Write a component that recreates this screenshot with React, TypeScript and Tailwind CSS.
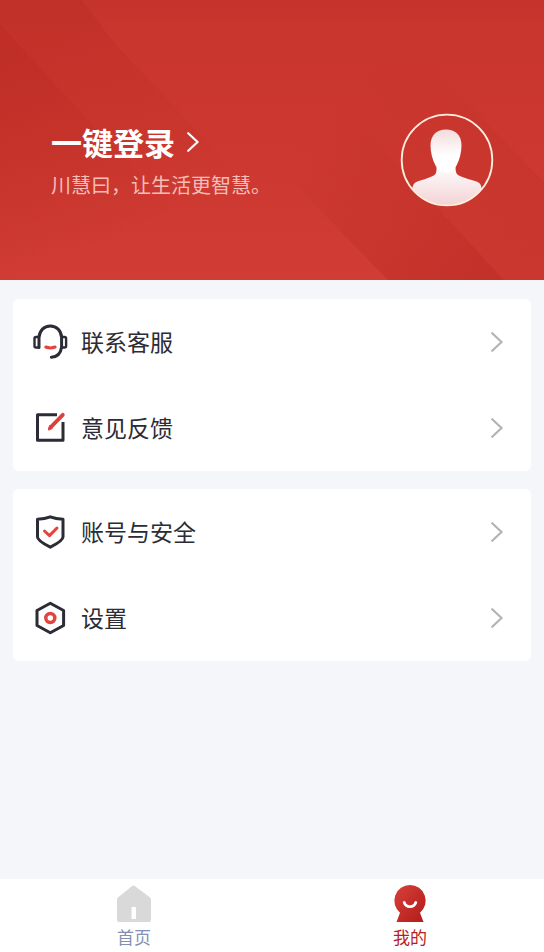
import type { ReactNode } from 'react';

type MenuItem = {
  label: string;
  icon: ReactNode;
};

function Chevron({ className }: { className: string }) {
  return (
    <svg className={className} viewBox="0 0 12 20" fill="none" stroke="currentColor" strokeWidth="2.2" strokeLinecap="round" strokeLinejoin="round" aria-hidden="true">
      <path d="M1.200 1.200l9.400 8.800-9.400 8.800" />
    </svg>
  );
}

function HeadsetIcon() {
  return (
    <svg className="size-9" viewBox="0 0 36 36" fill="none" stroke="#2b2c35" strokeWidth="3" strokeLinecap="round" aria-hidden="true">
      <path d="M7 23.500V13.500C7.500 6.600 12 2 18.300 2S29.200 6.600 29.600 13.500v9.500c-.8 6-4.300 10-10.300 10.300" />
      <path d="M6.500 13H4q-1.500 0-1.500 1.500v7.500q0 1.500 1.500 1.500h2.500M30.100 13h2.500q1.500 0 1.500 1.500v7.500q0 1.500-1.500 1.500h-2.500" strokeWidth="2.400" />
      <path d="M13.800 23c3 1.200 6.300 1.200 9.300 0" stroke="#e2453f" />
    </svg>
  );
}

function FeedbackIcon() {
  return (
    <svg className="size-9" viewBox="0 0 36 36" fill="none" stroke="#2b2c35" strokeWidth="3" aria-hidden="true">
      <path d="M25 4.800H5.500v25.400h25.500V12" strokeLinejoin="round" />
      <path d="M30.800 4.800L19.500 16.300" stroke="#dc403d" strokeWidth="3.800" strokeLinecap="round" />
      <path d="M18 15l2.800 2.900-2.300 1.700-2.100.4.300-2.200z" fill="#dc403d" stroke="#dc403d" strokeWidth="1" strokeLinejoin="round" />
    </svg>
  );
}

function ShieldIcon() {
  return (
    <svg className="size-9" viewBox="0 0 36 36" fill="none" stroke="#2b2c35" strokeWidth="3" strokeLinecap="round" strokeLinejoin="round" aria-hidden="true">
      <path d="M18.300 2.800C22.500 4.400 26.500 5 31 5.200V23c0 3-6.500 7-12.700 10.200C12 30 5.500 26 5.500 23V5.200c4.500-.2 8.600-.8 12.800-2.400z" />
      <path d="M12.500 17l5 4.600 7.500-7.600" stroke="#e2453f" />
    </svg>
  );
}

function SettingsIcon() {
  return (
    <svg className="size-9" viewBox="0 0 36 36" fill="none" stroke="#2b2c35" strokeWidth="3" strokeLinejoin="round" aria-hidden="true">
      <path d="M18.300 3.200L31.600 10.500v15L18.300 32.800 5 25.500v-15z" />
      <circle cx="18.300" cy="18" r="4.500" stroke="#e2453f" strokeWidth="3.500" />
    </svg>
  );
}

function Avatar() {
  return (
    <svg className="size-24" viewBox="0 0 96 96" aria-hidden="true">
      <defs>
        <linearGradient id="head" x1="0" y1="0" x2="0" y2="1">
          <stop offset="0" stopColor="#f4dadb" />
          <stop offset="0.6" stopColor="#fff" />
        </linearGradient>
        <linearGradient id="body" x1="0" y1="0" x2="0" y2="1">
          <stop offset="0" stopColor="#fff" />
          <stop offset="1" stopColor="#f2d0d3" />
        </linearGradient>
        <clipPath id="ring">
          <circle cx="48" cy="48" r="45" />
        </clipPath>
      </defs>
      <g clipPath="url(#ring)">
        <path d="M37.500 52c0 5 .5 9.500-2 11C30 66.500 21 68 16.500 70.500 13.500 72 13 77 13 82v14h70V82c0-5-.5-10-3.500-11.500C75 68 65 66.500 59 63c-2.500-1.500-2.500-6-2.500-11z" fill="url(#body)" />
        <path d="M47 17.500c9 0 15.500 5.500 15.500 16 0 7-2 14.500-5 20-2.500 4.500-6 7-10.500 7s-8-2.500-10.500-7c-3-5.500-5-13-5-20 0-10.500 6.500-16 15.500-16z" fill="url(#head)" />
      </g>
      <circle cx="48" cy="48" r="45.300" fill="none" stroke="#fdeee0" strokeWidth="1.800" />
    </svg>
  );
}

const groups: MenuItem[][] = [
  [
    { label: '联系客服', icon: <HeadsetIcon /> },
    { label: '意见反馈', icon: <FeedbackIcon /> },
  ],
  [
    { label: '账号与安全', icon: <ShieldIcon /> },
    { label: '设置', icon: <SettingsIcon /> },
  ],
];

function HeaderPattern() {
  return (
    <svg className="absolute inset-0 size-full" viewBox="0 0 544 280" preserveAspectRatio="none" aria-hidden="true">
      <defs>
        <linearGradient id="base" x1="0" y1="0" x2="0" y2="1">
          <stop offset="0" stopColor="#c4342b" />
          <stop offset="0.12" stopColor="#c9362e" />
          <stop offset="0.5" stopColor="#cc3830" />
          <stop offset="1" stopColor="#d13d34" />
        </linearGradient>
        <linearGradient id="fadeDown" gradientUnits="userSpaceOnUse" x1="60" y1="40" x2="140" y2="230">
          <stop offset="0" stopColor="#b92a22" stopOpacity="0.36" />
          <stop offset="1" stopColor="#b92a22" stopOpacity="0" />
        </linearGradient>
        <linearGradient id="fadeUp" gradientUnits="userSpaceOnUse" x1="450" y1="280" x2="330" y2="140">
          <stop offset="0" stopColor="#b92a22" stopOpacity="0.4" />
          <stop offset="1" stopColor="#b92a22" stopOpacity="0" />
        </linearGradient>
        <linearGradient id="corner" gradientUnits="userSpaceOnUse" x1="544" y1="230" x2="370" y2="60">
          <stop offset="0" stopColor="#b92a22" stopOpacity="0.3" />
          <stop offset="1" stopColor="#b92a22" stopOpacity="0" />
        </linearGradient>
      </defs>
      <path d="M0 0h544v280H0z" fill="url(#base)" />
      <path d="M0 0h82l34 45 44 46 90 99v90H0z" fill="url(#fadeDown)" />
      <path d="M0 24l90 98 120 125v33H0z" fill="url(#fadeDown)" />
      <path d="M388 280L240 128 390 24l154 158v98z" fill="url(#corner)" />
      <path d="M388 280L240 128l96-30 168 182z" fill="url(#fadeUp)" />
    </svg>
  );
}

export default function App() {
  return (
    <div className="flex min-h-screen flex-col bg-[#f5f6fa] font-['Noto_Sans_CJK_SC',sans-serif] text-[#2b2c35]">
      <header className="relative bg-[#cb3730]">
        <HeaderPattern />
        <div className="relative flex items-start justify-between pt-28 pr-[49px] pb-18 pl-[51px]">
          <div className="pt-2">
            <button type="button" className="flex items-center gap-3 text-[31px] leading-11 font-bold text-white">
              一键登录
              <Chevron className="h-5 w-3" />
            </button>
            <p className="text-xl leading-[42px] text-[#f4bdb8]">川慧曰，让生活更智慧。</p>
          </div>
          <button type="button" aria-label="头像">
            <Avatar />
          </button>
        </div>
      </header>

      <main className="flex flex-1 flex-col gap-[18px] px-[13px] py-[19px]">
        {groups.map((items) => (
          <ul key={items[0].label} className="rounded-md bg-white">
            {items.map((item) => (
              <li key={item.label}>
                <a href="#" className="flex h-[86px] items-center pr-7 pl-[19px]">
                  {item.icon}
                  <span className="ml-[13px] flex-1 pb-[2px] text-[23px]">{item.label}</span>
                  <Chevron className="h-5 w-3 text-[#b3b3b3]" />
                </a>
              </li>
            ))}
          </ul>
        ))}
      </main>

      <nav className="flex h-[73px] gap-2 bg-white text-[17px] leading-7">
        <a href="#" className="flex flex-1 flex-col items-center pt-1 text-[#8490b3]">
          <svg className="size-10" viewBox="0 0 40 40" aria-hidden="true">
            <path d="M18.500 2.800q1-.8 2 0L36 14.500q1 1 1 2.500v20q0 2-2 2H5q-2 0-2-2V17q0-1.500 1-2.500z" fill="#d9d9d9" />
            <rect x="17.500" y="24" width="4.500" height="12" rx="0.500" fill="#fff" />
          </svg>
          首页
        </a>
        <a href="#" className="flex flex-1 flex-col items-center pt-1 text-[#b5211e]">
          <svg className="size-10" viewBox="0 0 40 40" aria-hidden="true">
            <defs>
              <linearGradient id="mine" x1="0" y1="0" x2="1" y2="1">
                <stop offset="0" stopColor="#d8403a" />
                <stop offset="1" stopColor="#b01c19" />
              </linearGradient>
            </defs>
            <path d="M20 2a15.700 15.700 0 0 1 10 27.800L33.500 39h-27l3.500-9.200A15.700 15.700 0 0 1 20 2z" fill="url(#mine)" />
            <path d="M14.200 19.500c2 5.500 9.600 5.500 11.600 0" fill="none" stroke="#fff" strokeWidth="2.800" strokeLinecap="round" />
          </svg>
          我的
        </a>
      </nav>
    </div>
  );
}
